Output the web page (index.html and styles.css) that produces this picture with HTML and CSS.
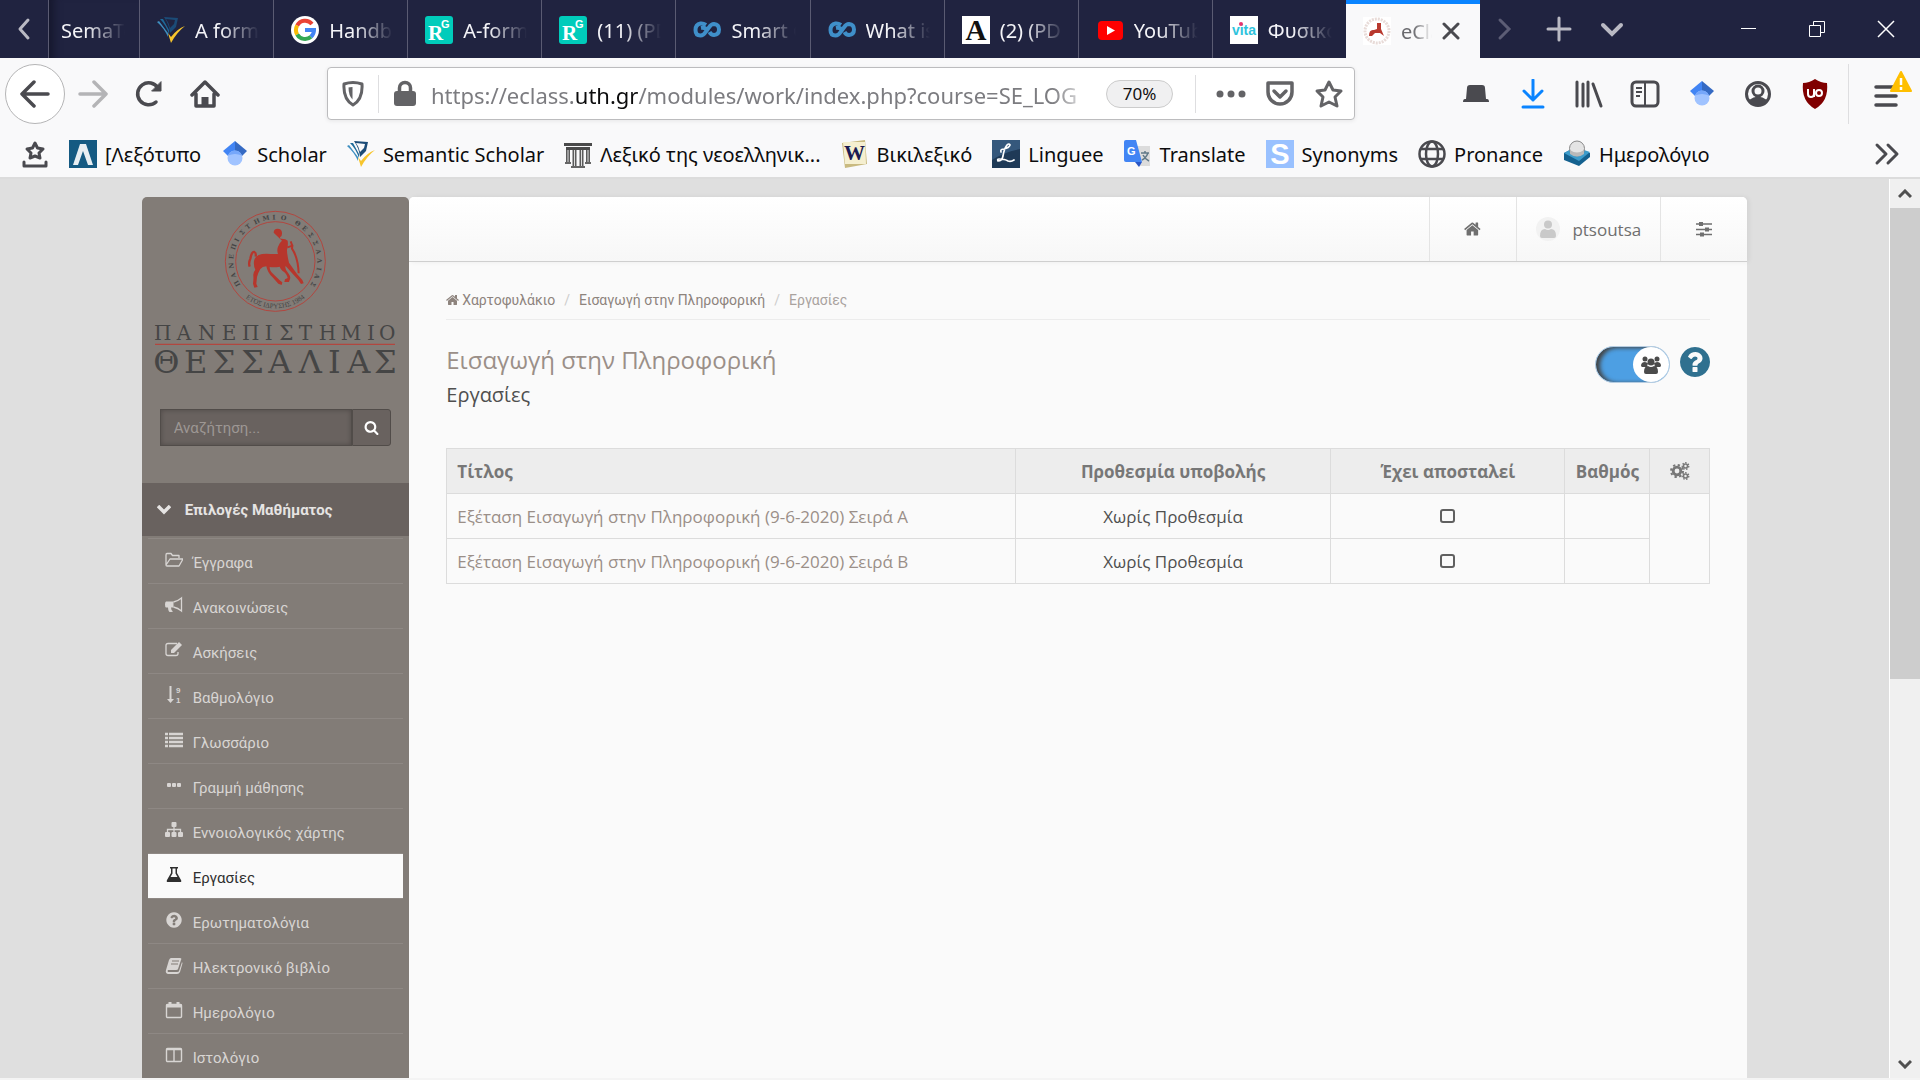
FILE: index.html
```html
<!DOCTYPE html>
<html lang="el">
<head>
<meta charset="utf-8">
<title>eClass - Εργασίες</title>
<link rel="stylesheet" href="styles.css">
</head>
<body>
<svg class="defs" aria-hidden="true">
  <symbol id="semantic" viewBox="0 0 28 28">
    <path d="M0 6l2-1 9 12v4Q7 12 0 6z" fill="#3f8fc0"/><path d="M3 3l3 0 6 11v4Q9 9 3 3z" fill="#1d6a99"/>
    <path d="M7 1l14 1-2 9-6 6Q12 8 7 1zM9 3q3 4 4 9l4-4 1-4z" fill="#1b4b77" fill-rule="evenodd"/>
    <path d="M11 17l3 4Q20 13 28 10 20 16 14 27z" fill="#f7c52d"/>
  </symbol>
  <symbol id="rgate" viewBox="0 0 28 28">
    <rect width="28" height="28" rx="3" fill="#00ccbb"/>
    <text x="3" y="24" font-family="Liberation Serif, serif" font-size="21" font-weight="bold" fill="#fff">R</text>
    <text x="16" y="12" font-family="Liberation Sans, sans-serif" font-size="11" font-weight="bold" fill="#fff">G</text>
  </symbol>
  <symbol id="loop" viewBox="0 0 28 28">
    <path d="M13 9Q10 7 7.500 7.500 2.500 8.500 2.500 14t5 5.500q3 0 5.500-4l3-4q2-3.500 5-3.500 5 .5 5 5.500T21 19q-3 0-4.500-3M8 12q5-1 6 3" fill="none" stroke="#3f8fc9" stroke-width="4"/>
  </symbol>
  <symbol id="scholar" viewBox="0 0 28 28">
    <path d="M14 1L2 11l5 5h7z" fill="#4285f4"/><path d="M14 1l12 10-5 5h-7z" fill="#356ac3"/>
    <circle cx="14" cy="18" r="7.500" fill="#a0c3ff"/><path d="M7 15.500a7.500 7.500 0 0 1 14 0q-7-3-14 0z" fill="#76a7fa"/>
  </symbol>
  <symbol id="home" viewBox="0 0 1792 1792">
    <path fill="currentColor" d="M1408 992v480q0 26-19 45t-45 19h-384v-384h-256v384h-384q-26 0-45-19t-19-45v-480q0-1 .5-3t.5-3l575-474 575 474q1 2 1 6zm223-69l-62 74q-8 9-21 11h-3q-13 0-21-7l-692-577-692 577q-12 8-24 7-13-2-21-11l-62-74q-8-10-7-23.500t11-21.500l719-599q32-26 76-26t76 26l244 204v-195q0-14 9-23t23-9h192q14 0 23 9t9 23v408l219 182q10 8 11 21.500t-7 23.500z"/>
  </symbol>
  <symbol id="question" viewBox="0 0 1792 1792">
    <path fill="currentColor" d="M1024 1376v-192q0-14-9-23t-23-9h-192q-14 0-23 9t-9 23v192q0 14 9 23t23 9h192q14 0 23-9t9-23zm256-672q0-88-55.500-163t-138.500-116-170-41q-243 0-371 213-15 24 8 42l132 100q7 6 19 6 16 0 25-12 53-68 86-92 34-24 86-24 48 0 85.500 26t37.500 59q0 38-20 61t-68 45q-63 28-115.500 86.500t-52.500 125.500v36q0 14 9 23t23 9h192q14 0 23-9t9-23q0-19 21.500-49.500t54.500-49.500q32-18 49-28.500t46-35 44.500-48 28-60.500 12.500-81zm384 192q0 209-103 385.500t-279.500 279.500-385.500 103-385.500-103-279.500-279.500-103-385.500 103-385.500 279.500-279.500 385.500-103 385.500 103 279.500 279.500 103 385.500z"/>
  </symbol>
</svg>

<header class="browser">
  <div class="tabbar">
    <button class="tab-scroll" aria-label="Scroll tabs left"><svg width="16" height="26" viewBox="0 0 16 26" fill="none" stroke="#b9b9c3" stroke-width="3" stroke-linecap="round" stroke-linejoin="round"><path d="M12 4L4 13l8 9"/></svg></button>
    <nav class="tabs">
      <a href="#" class="tab cut"><span>SemaTo</span></a>
      <a href="#" class="tab"><svg><use href="#semantic"/></svg><span>A form</span></a>
      <a href="#" class="tab"><svg viewBox="0 0 28 28"><circle cx="14" cy="14" r="14" fill="#fff"/><g fill="none" stroke-width="4"><path d="M21 8A9 9 0 0 0 6.200 9.500" stroke="#ea4335"/><path d="M6.200 9.500a9 9 0 0 0 0 9" stroke="#fbbc05"/><path d="M6.200 18.500A9 9 0 0 0 20 20.700" stroke="#34a853"/><path d="M14 14h9q0 4-3 6.700" stroke="#4285f4"/></g></svg><span>Handb</span></a>
      <a href="#" class="tab"><svg><use href="#rgate"/></svg><span>A-form</span></a>
      <a href="#" class="tab"><svg><use href="#rgate"/></svg><span>(11) (PD</span></a>
      <a href="#" class="tab"><svg><use href="#loop"/></svg><span>Smart C</span></a>
      <a href="#" class="tab"><svg><use href="#loop"/></svg><span>What is</span></a>
      <a href="#" class="tab"><svg viewBox="0 0 28 28"><path fill="#fff" d="M0 0h28v28H0z"/><text x="14" y="24" text-anchor="middle" font-family="Liberation Serif, serif" font-weight="bold" font-size="29" fill="#111">A</text></svg><span>(2) (PD</span></a>
      <a href="#" class="tab"><svg viewBox="0 0 28 28"><rect x="2" y="5" width="25" height="19" rx="4" fill="#f00"/><path d="M11 10l8 4.500-8 4.500z" fill="#fff"/></svg><span>YouTub</span></a>
      <a href="#" class="tab"><svg viewBox="0 0 28 28"><path fill="#fff" d="M0 0h28v28H0z"/><text x="14" y="19" text-anchor="middle" font-family="Liberation Sans, sans-serif" font-weight="bold" font-size="14" fill="#2fc3dd">vita</text><circle cx="11" cy="8" r="2" fill="#e8336d"/></svg><span>Φυσικο</span></a>
      <a href="#" class="tab active"><svg viewBox="0 0 28 28"><path fill="#fff" d="M0 0h28v28H0z"/><circle cx="14" cy="14" r="12" fill="none" stroke="#e8dbd8" stroke-width="3" stroke-dasharray="2 1"/><path d="M6 19q0-7 5-6l3-1 0-6 4 0v6l3 7-4-3-5 0-3 3z" fill="#b8382e"/></svg><span>eClass</span><svg class="close" viewBox="0 0 18 18" stroke="#4a4a4f" stroke-width="3" stroke-linecap="round"><path d="M2 2l14 14M16 2L2 16"/></svg></a>
    </nav>
    <div class="tab-tools">
      <button aria-label="Scroll tabs right"><svg width="26" height="26" viewBox="0 0 26 26" fill="none" stroke="#5c5d75" stroke-width="3" stroke-linecap="round"><path d="M8 4l9 9-9 9"/></svg></button>
      <button aria-label="New tab"><svg width="26" height="26" viewBox="0 0 26 26" stroke="#b9b9c3" stroke-width="3" stroke-linecap="round"><path d="M13 2v22M2 13h22"/></svg></button>
      <button aria-label="All tabs"><svg width="26" height="26" viewBox="0 0 26 26" fill="none" stroke="#b9b9c3" stroke-width="4" stroke-linecap="round"><path d="M4 9l9 9 9-9"/></svg></button>
    </div>
    <div class="window-tools">
      <button aria-label="Minimize"><svg width="18" height="18" viewBox="0 0 18 18" stroke="#fff"><path d="M2 8.500h15"/></svg></button>
      <button aria-label="Restore"><svg width="18" height="18" viewBox="0 0 18 18" fill="none" stroke="#fff"><path d="M1.500 5.500h11v11h-11zM5.500 5v-3.500h11v11H13"/></svg></button>
      <button aria-label="Close window"><svg width="18" height="18" viewBox="0 0 18 18" stroke="#fff" stroke-width="1.500"><path d="M1 1l16 16M17 1L1 17"/></svg></button>
    </div>
  </div>

  <div class="toolbar">
    <div class="nav-buttons">
      <button class="back" aria-label="Back"><svg width="30" height="30" viewBox="0 0 30 30" fill="none" stroke="#4a4a4f" stroke-width="3.500" stroke-linecap="round" stroke-linejoin="round"><path d="M28 15H2M14 3L2 15l12 12"/></svg></button>
      <button aria-label="Forward" disabled><svg width="30" height="30" viewBox="0 0 30 30" fill="none" stroke="#b4b4b6" stroke-width="3.500" stroke-linecap="round" stroke-linejoin="round"><path d="M2 15h26M16 3l12 12-12 12"/></svg></button>
      <button aria-label="Reload"><svg width="30" height="30" viewBox="0 0 30 30" fill="none" stroke="#4a4a4f" stroke-width="3.500" stroke-linecap="round"><path d="M22 23A11 11 0 1 1 24 9"/><path d="M18 12h9V3z" fill="#4a4a4f" stroke-width="1"/></svg></button>
      <button aria-label="Home"><svg width="30" height="30" viewBox="0 0 30 30" fill="none" stroke="#4a4a4f" stroke-width="3.500" stroke-linecap="round" stroke-linejoin="round"><path d="M2 16L15 3l13 13M6 15v12h18V15"/><path d="M15 27v-9" stroke-width="7" stroke-linecap="butt"/></svg></button>
    </div>
    <div class="urlbar">
      <svg class="shield" width="24" height="28" viewBox="0 0 24 28"><path d="M3 4q9-3 18 0 1 15-9 21Q2 19 3 4z" fill="none" stroke="#636366" stroke-width="3" stroke-linejoin="round"/><path d="M11.500 7q-3 0-4 .5 0 8 4 12z" fill="#636366"/></svg>
      <svg class="lock" width="24" height="28" viewBox="0 0 24 28"><rect x="1" y="11" width="22" height="15" rx="3" fill="#636366"/><path d="M6.500 12V8a5.500 5.500 0 0 1 11 0v4" fill="none" stroke="#636366" stroke-width="3.500"/></svg>
      <div class="address">https://eclass.<b>uth.gr</b>/modules/work/index.php?course=SE_LOG</div>
      <button class="zoom-level">70%</button>
      <div class="url-actions">
        <svg width="30" height="30" viewBox="0 0 30 30" fill="#636366"><circle cx="4" cy="15" r="3.500"/><circle cx="15" cy="15" r="3.500"/><circle cx="26" cy="15" r="3.500"/></svg>
        <svg width="30" height="30" viewBox="0 0 30 30" fill="none" stroke="#636366" stroke-width="3.500" stroke-linecap="round" stroke-linejoin="round"><path d="M3 4h24v9a12 12 0 0 1-24 0z"/><path d="M9 12l6 6 6-6"/></svg>
        <svg width="30" height="30" viewBox="0 0 30 30" fill="none" stroke="#636366" stroke-width="3" stroke-linejoin="round"><path d="M15 3l4 8 8 1-6 6 2 9-8-4-8 4 2-9-6-6 8-1z"/></svg>
      </div>
    </div>
    <div class="extensions">
      <button aria-label="Hat"><svg width="30" height="30" viewBox="0 0 30 30" fill="#4a4a4f"><path d="M5 20L6 9q0-3 3-3h12q3 0 3 3l1 11h1q2 0 2 3H2q0-3 2-3z"/></svg></button>
      <button aria-label="Downloads"><svg width="30" height="30" viewBox="0 0 30 30" fill="none" stroke="#0a84ff" stroke-width="3" stroke-linecap="round" stroke-linejoin="round"><path d="M15 1v20M6 12l9 9 9-9M5 28h20"/></svg></button>
      <button aria-label="Library"><svg width="30" height="30" viewBox="0 0 30 30" fill="none" stroke="#4a4a4f" stroke-width="3" stroke-linecap="round"><path d="M3 3v24M9 5v22M14 3v24M19 5l8 22"/></svg></button>
      <button aria-label="Sidebars"><svg width="30" height="30" viewBox="0 0 30 30" fill="none" stroke="#4a4a4f" stroke-width="3"><rect x="2" y="3" width="26" height="24" rx="4"/><path d="M15 3v24M6 9h6M6 13h6M6 17h4" stroke-width="2"/></svg></button>
      <button aria-label="Scholar"><svg width="28" height="28"><use href="#scholar"/></svg></button>
      <button aria-label="Account"><svg width="30" height="30" viewBox="0 0 30 30"><circle cx="15" cy="15" r="11.500" fill="none" stroke="#4a4a4f" stroke-width="3"/><circle cx="15" cy="12" r="5" fill="none" stroke="#4a4a4f" stroke-width="3"/><path d="M6 21q9-7 18 0-9 10-18 0z" fill="#4a4a4f"/></svg></button>
      <button aria-label="uBlock Origin"><svg width="30" height="30" viewBox="0 0 30 30"><path d="M15 0q6 4 12 4 2 18-12 26Q1 22 3 4q6 0 12-4z" fill="#800000"/><path d="M8 10v5q0 3 3 3t3-3v-5M14 10v8" fill="none" stroke="#fff" stroke-width="2"/><circle cx="19" cy="14" r="3" fill="none" stroke="#fff" stroke-width="2"/></svg></button>
    </div>
    <button class="menu" aria-label="Menu"><svg width="42" height="42" viewBox="0 0 42 42"><path d="M6 17h18M6 26h20M6 35h20" stroke="#4a4a4f" stroke-width="3.500" stroke-linecap="round"/><path d="M31 2l10 19H21z" fill="#ffbf00" stroke="#ffbf00" stroke-width="2" stroke-linejoin="round"/><path d="M31 8v7M31 17v3" stroke="#fff" stroke-width="2.500"/></svg></button>
  </div>

  <nav class="bookmarks">
    <a href="#" aria-label="Bookmarks"><svg viewBox="0 0 28 28" fill="none" stroke="#4a4a4f" stroke-width="3" stroke-linecap="round" stroke-linejoin="round"><path d="M14 3l2.500 5 5.500 1-4 4 1 5-5-2-5 2 1-5-4-4 5.500-1zM3 22v4h22v-4"/></svg></a>
    <a href="#"><svg viewBox="0 0 28 28"><path d="M0 0h28v28H0z" fill="#155a82"/><path d="M4 25L11 4h6l7 21h-5L14 11 9 25z" fill="#e8eef2"/></svg>[Λεξότυπο</a>
    <a href="#"><svg><use href="#scholar"/></svg>Scholar</a>
    <a href="#"><svg><use href="#semantic"/></svg>Semantic Scholar</a>
    <a href="#"><svg viewBox="0 0 28 28"><path d="M0 3h28v3H0zM2 7h24v3H2z" fill="#4a4a4a"/><path d="M4 10v13M10.500 10v16M17.500 10v16M24 10v13" stroke="#5b5b5b" stroke-width="4"/><path d="M4 10v12M10.500 10v16M17.500 10v16M24 10v12" stroke="#ddd"/><path d="M1 23h6M7 27h14M21 23h6" stroke="#666" stroke-width="2"/></svg>Λεξικό της νεοελληνικ...</a>
    <a href="#"><svg viewBox="0 0 28 28"><path d="M1 3L24 0l2 24-22 4z" fill="#c9ba80"/><path d="M2 2h22l1 22H4z" fill="#f5efd0"/><text x="13.500" y="20" text-anchor="middle" font-family="Liberation Serif, serif" font-size="21" font-weight="bold" fill="#1b1b52">W</text></svg>Βικιλεξικό</a>
    <a href="#"><svg viewBox="0 0 28 28"><path d="M0 0h28v28H0z" fill="#1f3a57"/><path d="M0 0h28v9Q12 12 0 20z" fill="#35587c"/><path d="M9 12q-1-3 3-3 5-1 6-4-1-2-3 0-3 4-4 11-1 5-5 5-1-2 1-2 6 0 9 2 3 1 6-1" fill="none" stroke="#fff" stroke-width="1.700" stroke-linecap="round"/></svg>Linguee</a>
    <a href="#"><svg viewBox="0 0 28 28"><path d="M12 6h14v20H16z" fill="#dcdcdc"/><path d="M2 0h10l6 22H2q-2 0-2-2V2q0-2 2-2z" fill="#4285f4"/><path d="M11 22h7l-3 5z" fill="#2a56c6"/><text x="3" y="15" font-family="Liberation Sans, sans-serif" font-size="11" font-weight="bold" fill="#fff">G</text><path d="M17 13h8M21 11v2M24 13q-2 5-6 7M19 15q2 4 6 6" stroke="#607988" stroke-width="1.500" fill="none"/></svg>Translate</a>
    <a href="#"><svg viewBox="0 0 28 28"><path d="M0 0h28v28H0z" fill="#99c1ff"/><text x="14" y="24" text-anchor="middle" font-family="Liberation Sans, sans-serif" font-size="29" font-weight="bold" fill="#fff">S</text></svg>Synonyms</a>
    <a href="#"><svg viewBox="0 0 28 28" fill="none" stroke="#4a4a4f" stroke-width="2.500"><circle cx="14" cy="14" r="12.500"/><ellipse cx="14" cy="14" rx="6" ry="12.500"/><path d="M3 9h22M3 19h22"/></svg>Pronance</a>
    <a href="#"><svg viewBox="0 0 28 28"><path d="M1 13l12-6 14 6v4L16 26 1 20z" fill="#14618f"/><path d="M1 13l11-6 15 5-11 9z" fill="#3d9ccb"/><circle cx="14" cy="8.500" r="7.500" fill="#e4e4e4" stroke="#888"/><path d="M7 10q7 5 14 0v4q-7 5-14 0z" fill="#b9b9b9"/></svg>Ημερολόγιο</a>
    <button class="overflow" aria-label="More bookmarks"><svg width="26" height="24" viewBox="0 0 26 24" fill="none" stroke="#4a4a4f" stroke-width="3" stroke-linecap="round" stroke-linejoin="round"><path d="M3 3l9 9-9 9M14 3l9 9-9 9"/></svg></button>
  </nav>
</header>

<div class="viewport">
  <div class="page">
    <div class="layout">
      <aside class="sidebar">
        <a href="#" class="logo" aria-label="Πανεπιστήμιο Θεσσαλίας">
          <svg width="242" height="164" viewBox="78 90 726 492">
            <g fill="none" stroke="#b2463f" stroke-width="3"><circle cx="442" cy="244" r="150"/><circle cx="442" cy="244" r="119"/></g>
            <path id="arc-top" fill="none" d="M337.500 314.500A126 126 0 1 1 546.500 314.500"/>
            <path id="arc-low" fill="none" d="M308 290A142 142 0 0 0 576 290"/>
            <g fill="#454545" font-family="DejaVu Serif, serif" font-weight="bold">
              <text font-size="19" x="0 27 54 81 108 134 158 182 209 235 264 288 311 331 357 383 409 435 461 488 506 532"><textPath href="#arc-top">ΠΑΝΕΠΙΣΤΗΜΙΟ ΘΕΣΣΑΛΙΑΣ</textPath></text>
              <text font-size="21" font-weight="normal" font-family="Liberation Serif, serif" text-anchor="middle"><textPath href="#arc-low" startOffset="50%">ΕΤΟΣ ΙΔΡΥΣΗΣ 1984</textPath></text>
            </g>
            <path fill="#b7362c" d="M437 158q0-12 12-12t13 12-6 14l1 4q16-1 22 6 2 14-2 28 0 14 6 38l24 34 16 18 4 10-8 2-8-12-22-24-16-18q-4 8 8 22 6 8 6 14l-4 12h-14l2-8 8-4q-2-14-16-22-6-6-8-12-14 3-30 1 0 12 10 20l20 20 8 6-2 8-10-4-18-20q-14-12-18-32-12 0-18 8-6 10-10 24l-2 20 4 10-10 2-4-12q2-12 1-24-1-10 6-18-6-12-4-26 2-12 14-18 12-5 36-3h22q-4-12 0-22 4-12 12-18z"/>
            <path d="M365 260q-4-12 2-24 4-22 12-20 6 2 4 14" fill="none" stroke="#b7362c" stroke-width="7"/>
            <path d="M488 184q6 12 4 22 18 26 20 74M478 202l18-6" fill="none" stroke="#b7362c" stroke-width="6"/>
            <g fill="#454545" font-family="DejaVu Serif, serif">
              <text font-size="60" y="479" x="78 146 210 281 342 410 454 512 572 638 717 753">ΠΑΝΕΠΙΣΤΗΜΙΟ</text>
              <text font-size="96" y="578" x="76 168 254 340 421 512 600 658 738">ΘΕΣΣΑΛΙΑΣ</text>
            </g>
            <path d="M81 493h720" stroke="#b2463f" stroke-width="4"/>
          </svg>
        </a>
        <form class="search">
          <input type="text" placeholder="Αναζήτηση..." aria-label="Αναζήτηση">
          <button type="button" aria-label="Αναζήτηση"><svg width="15" height="15" viewBox="0 0 1792 1792"><path fill="#fff" d="M1216 832q0-185-131.500-316.500t-316.500-131.500-316.500 131.500-131.500 316.500 131.500 316.500 316.500 131.500 316.500-131.500 131.500-316.500zm512 832q0 52-38 90t-90 38q-54 0-90-38l-343-342q-179 124-399 124-143 0-273.500-55.500t-225-150-150-225-55.500-273.500 55.500-273.500 150-225 225-150 273.500-55.500 273.500 55.500 225 150 150 225 55.500 273.500q0 220-124 399l343 343q37 37 37 90z"/></svg></button>
        </form>
        <button class="section"><svg width="14" height="10" viewBox="0 0 14 10" fill="none" stroke="#e6e4e3" stroke-width="3.500"><path d="M1 1l6 6 6-6"/></svg>Επιλογές Μαθήματος</button>
        <ul class="course-menu">
          <li><a href="#"><svg viewBox="0 0 18 18" fill="none" stroke="currentColor" stroke-width="1.300" stroke-linejoin="round"><path d="M14 7V4.500H7.500L6 2.500H2Q1 2.500 1 4v10q0 1 1 1h12l4-7H5l-4 6"/></svg>Έγγραφα</a></li>
          <li><a href="#"><svg viewBox="0 0 18 18" fill="currentColor"><path d="M1 5.500h7.500v6H6q0 3 2 4-3 1-4 0-1-2-1-4H1Q0 11 0 8.500t1-3z"/><path d="M8.500 6Q13 5 16.500 2v13Q13 12 8.500 11" fill="none" stroke="currentColor" stroke-width="1.300"/></svg>Ανακοινώσεις</a></li>
          <li><a href="#"><svg viewBox="0 0 18 18" fill="none" stroke="currentColor" stroke-width="1.300"><path d="M12 2.500H3q-2 0-2 2v8q0 2 2 2h8q2 0 2-2V11"/><path d="M6 12V9l8-8 3 3-8 8z" fill="currentColor" stroke="none"/></svg>Ασκήσεις</a></li>
          <li><a href="#"><svg viewBox="0 0 18 18" fill="currentColor"><path d="M4.500 0h2v13H9l-3.500 4L2 13h2.500z"/><text x="11" y="7" font-size="8" font-weight="bold" font-family="Liberation Sans, sans-serif">9</text><text x="11" y="17" font-size="8" font-weight="bold" font-family="Liberation Sans, sans-serif">1</text></svg>Βαθμολόγιο</a></li>
          <li><a href="#"><svg viewBox="0 0 18 18" fill="none" stroke="currentColor" stroke-width="2.500"><path d="M0 3h3M4 3h14M0 7h3M4 7h14M0 11h3M4 11h14M0 15h3M4 15h14"/></svg>Γλωσσάριο</a></li>
          <li><a href="#"><svg viewBox="0 0 18 18" fill="currentColor"><rect x="2" y="7" width="4" height="4" rx="1"/><rect x="7" y="7" width="4" height="4" rx="1"/><rect x="12" y="7" width="4" height="4" rx="1"/></svg>Γραμμή μάθησης</a></li>
          <li><a href="#"><svg viewBox="0 0 18 18" fill="currentColor"><rect x="6.500" y="1" width="5" height="5" rx="1"/><rect y="11" width="5" height="5" rx="1"/><rect x="6.500" y="11" width="5" height="5" rx="1"/><rect x="13" y="11" width="5" height="5" rx="1"/><path d="M9 5v7M2.500 12V8.500h13V12" fill="none" stroke="currentColor" stroke-width="1.300"/></svg>Εννοιολογικός χάρτης</a></li>
          <li class="current"><a href="#"><svg viewBox="0 0 18 18" fill="currentColor"><path d="M5 1h8v1.500h-1V7l4 7q1 2-1 2H3q-2 0-1-2l4-7V2.500H5zM7.500 2.500V7.500L5.500 11h7l-2-3.500v-5z" fill-rule="evenodd"/></svg>Εργασίες</a></li>
          <li><a href="#"><svg><use href="#question"/></svg>Ερωτηματολόγια</a></li>
          <li><a href="#"><svg viewBox="0 0 18 18" fill="currentColor"><path d="M6 2h9q2 0 1 2l-3 9q0 1-2 1H3q-1 1 0 2h9q2 0 2-1l3-9q1 1 0 3l-2 7q-1 2-3 2H3q-3-1-2-4L4 4q1-2 2-2z"/><path d="M7 5h7M6 8h7" stroke="#827c77" stroke-width="1.200"/></svg>Ηλεκτρονικό βιβλίο</a></li>
          <li><a href="#"><svg viewBox="0 0 18 18" fill="none" stroke="currentColor" stroke-width="1.400"><rect x="1.500" y="3.500" width="15" height="13" rx="1"/><path d="M1 5h16M5 1v4M9 3v2M13 1v4" stroke-width="3"/></svg>Ημερολόγιο</a></li>
          <li><a href="#"><svg viewBox="0 0 18 18" fill="none" stroke="currentColor" stroke-width="1.400"><rect x="1.500" y="2.500" width="15" height="13" rx="1"/><path d="M1 3.500h16M9 3v12"/></svg>Ιστολόγιο</a></li>
        </ul>
      </aside>

      <main class="content">
        <div class="topbar">
          <a href="#" aria-label="Αρχική"><svg width="18" height="18"><use href="#home"/></svg></a>
          <a href="#" class="user"><svg width="24" height="24" viewBox="0 0 24 24"><circle cx="12" cy="12" r="12" fill="#f2f2f2"/><circle cx="12" cy="7.500" r="4" fill="#c9c9c9"/><path d="M4 19q0-7 5-7 3 2 6 0 5 0 5 7 0 2-2 2H6q-2 0-2-2z" fill="#c9c9c9"/></svg>ptsoutsa</a>
          <a href="#" aria-label="Επιλογές"><svg width="16" height="16" viewBox="0 0 16 16" stroke="currentColor"><path d="M0 3h16M0 8.500h16M0 13.500h16" stroke-width="1.300"/><path d="M5 1v4M11 6.500v4M6 11.500v4" stroke-width="4"/></svg></a>
        </div>
        <div class="body">
          <nav class="breadcrumb">
            <a href="#"><svg width="14" height="14"><use href="#home"/></svg> Χαρτοφυλάκιο</a><i>/</i><a href="#">Εισαγωγή στην Πληροφορική</a><i>/</i><span>Εργασίες</span>
          </nav>
          <div class="heading">
            <div>
              <h1><a href="#">Εισαγωγή στην Πληροφορική</a></h1>
              <h2>Εργασίες</h2>
            </div>
            <div class="heading-tools">
              <label class="switch">
                <input type="checkbox" checked aria-label="Προβολή εκπαιδευόμενου">
                <span class="knob"><svg width="20" height="20" viewBox="0 0 20 20" fill="#4b4b4b"><circle cx="4" cy="4" r="2.500"/><circle cx="16" cy="4" r="2.500"/><path d="M0 11q0-4 4-4l3 1-1 4H1zM20 11q0-4-4-4l-3 1 1 4h5z"/><circle cx="10" cy="7" r="3.500"/><path d="M3 17q0-6 4-6 3 2 6 0 4 0 4 6 0 2-2 2H5q-2 0-2-2z"/></svg></span>
              </label>
              <a href="#" class="help" aria-label="Βοήθεια"><svg width="30" height="30" viewBox="128 128 1536 1536"><use href="#question" width="1792" height="1792"/></svg></a>
            </div>
          </div>
          <table>
            <colgroup><col class="c-title"><col class="c-due"><col><col class="c-grade"><col class="c-tools"></colgroup>
            <thead><tr><th>Τίτλος</th><th>Προθεσμία υποβολής</th><th>Έχει αποσταλεί</th><th>Βαθμός</th>
              <th><svg width="20" height="18" viewBox="0 0 20 18" fill="none" stroke="currentColor"><circle cx="7" cy="9" r="3.800" stroke-width="2.800"/><circle cx="7" cy="9" r="6" stroke-width="2" stroke-dasharray="2.300 2.412"/><circle cx="15.500" cy="4" r="2" stroke-width="1.500"/><circle cx="15.500" cy="4" r="3.300" stroke-width="1.300" stroke-dasharray="1.500 1.455"/><circle cx="15.500" cy="14" r="2" stroke-width="1.500"/><circle cx="15.500" cy="14" r="3.300" stroke-width="1.300" stroke-dasharray="1.500 1.455"/></svg></th></tr></thead>
            <tbody>
              <tr><td><a href="#">Εξέταση Εισαγωγή στην Πληροφορική (9-6-2020) Σειρά Α</a></td><td>Χωρίς Προθεσμία</td><td><input type="checkbox" aria-label="Έχει αποσταλεί: Σειρά Α"></td><td></td><td rowspan="2"></td></tr>
              <tr><td><a href="#">Εξέταση Εισαγωγή στην Πληροφορική (9-6-2020) Σειρά Β</a></td><td>Χωρίς Προθεσμία</td><td><input type="checkbox" aria-label="Έχει αποσταλεί: Σειρά Β"></td><td></td></tr>
            </tbody>
          </table>
        </div>
      </main>
    </div>
  </div>
  <div class="scrollbar">
    <button aria-label="Scroll up"><svg width="14" height="10" viewBox="0 0 14 10" fill="none" stroke="#505050" stroke-width="3"><path d="M1 8l6-6 6 6"/></svg></button>
    <div class="track"><div class="thumb"></div></div>
    <button aria-label="Scroll down"><svg width="14" height="10" viewBox="0 0 14 10" fill="none" stroke="#505050" stroke-width="3"><path d="M1 2l6 6 6-6"/></svg></button>
  </div>
</div>
</body>
</html>
```
FILE: styles.css
```css
* { box-sizing: border-box; }
body { margin: 0; height: 100vh; display: flex; flex-direction: column; overflow: hidden; background: #f4f4f4; font-family: "Open Sans", "Noto Sans", sans-serif; color: #4f4f4f; }
a { color: inherit; text-decoration: none; }
button { border: 0; padding: 0; background: none; color: inherit; font: inherit; display: flex; align-items: center; justify-content: center; }
svg { display: block; flex: none; }
.defs { display: none; }

/* Browser chrome */
.browser { flex: none; background: #f9f9fa; border-bottom: 2px solid #dcdcdc; font-family: "Noto Sans", sans-serif; }
.tabbar { display: flex; height: 58px; background: #202340; color: #f4f4f8; }
.tab-scroll { width: 48px; }
.tabs { flex: 1; display: grid; grid-template-columns: 91fr repeat(10, 134fr); min-width: 0; }
.tab { min-width: 0; display: flex; align-items: center; gap: 10px; padding: 2px 14px 0 17px; border-left: 1px solid #5a5b72; font-size: 20px; }
.tab.cut { padding-left: 12px; box-shadow: inset 12px 0 10px -8px #14162b; }
.tab svg { width: 28px; height: 28px; }
.tab span { flex: 1; min-width: 0; overflow: hidden; white-space: nowrap; mask-image: linear-gradient(to right, #000 40%, transparent); }
.tab.active { background: #f9f9fa; color: #4a4a4f; border-left: 0; border-top: 4px solid #0a84ff; padding-top: 0; }
.tab.active span { color: #6a6a6e; }
.tab svg.close { width: 18px; height: 18px; margin-right: 6px; }
.tab-tools { width: 165px; display: flex; justify-content: space-between; padding: 0 20px 0 12px; }
.window-tools { width: 275px; display: flex; justify-content: flex-end; }
.window-tools button { width: 69px; }

.toolbar { display: flex; align-items: center; height: 71px; }
.nav-buttons { display: flex; align-items: center; width: 327px; padding-left: 5px; }
.nav-buttons button { width: 56px; height: 60px; }
.nav-buttons .back { width: 60px; border: 1px solid #b5b5b6; border-radius: 50%; background: #fff; }
.urlbar { flex: 1; display: flex; align-items: center; height: 53px; background: #fff; border: 1px solid #bcbcbe; border-radius: 4px; box-shadow: 0 1px 4px rgba(0, 0, 0, .08); }
.shield { margin: 0 13px; }
.lock { border-left: 1px solid #dedee0; width: 53px; height: 38px; padding: 5px 12px; }
.address { flex: 1; min-width: 0; overflow: hidden; white-space: nowrap; padding-top: 2px; font-size: 22px; color: #7c7c80; mask-image: linear-gradient(to right, #000 94%, transparent); }
.address b { font-weight: 400; color: #0c0c0d; }
.zoom-level { width: 67px; height: 28px; margin-left: 14px; border: 1px solid #ccc; border-radius: 14px; background: #f0f0f1; color: #111; font-size: 17px; }
.url-actions { display: flex; align-items: center; gap: 19px; height: 38px; margin-left: 22px; padding: 0 10px 0 20px; border-left: 1px solid #dedee0; }
.extensions { display: flex; width: 493px; padding: 0 5px 0 93px; }
.extensions button { flex: 1; }
.menu { width: 72px; height: 60px; padding: 6px 0 0 12px; border-left: 1px solid #dedee0; align-items: flex-start; }

.bookmarks { display: flex; align-items: center; gap: 20px; height: 48px; padding: 2px 20px 0 21px; color: #0c0c0d; font-size: 20px; }
.bookmarks a { display: flex; align-items: center; gap: 8px; white-space: nowrap; }
.bookmarks a svg { width: 28px; height: 28px; }
.overflow { margin-left: auto; }

/* Page frame */
.viewport { flex: 1; display: flex; min-height: 0; margin-bottom: 2px; }
.page { flex: 1; background: #dfdfdf; overflow: hidden; padding-top: 18px; }
.layout { display: flex; width: 85%; min-height: 100%; margin: 0 auto; }
.scrollbar { width: 31px; display: flex; flex-direction: column; background: #f0f0f0; border-left: 1px solid #fff; }
.scrollbar button { height: 29px; }
.track { flex: 1; }
.thumb { height: 56%; background: #cdcdcd; }

/* Sidebar */
.sidebar { flex: 0 0 16.667%; min-width: 0; background: #827c77; border-radius: 5px 5px 0 0; font-family: Roboto, sans-serif; color: #d8d5d3; }
.logo { display: flex; justify-content: center; padding-top: 13px; }
.search { display: flex; height: 37px; margin: 35px 18px 37px; }
.search input { flex: 1; width: 0; min-width: 0; padding: 0 13px; border: 1px solid #514c49; border-radius: 0; background: #69625f; box-shadow: inset 0 0 5px rgba(0, 0, 0, .25); font: 15px Roboto, sans-serif; color: #ddd; }
.search input::placeholder { color: #9d9794; }
.search button { width: 39px; border: 1px solid #514c49; border-radius: 0 3px 3px 0; background: #69625f; }
.section { width: 100%; height: 53px; padding-left: 15px; gap: 14px; justify-content: flex-start; background: #69625f; color: #e6e4e3; font-size: 15px; font-weight: 700; }
.course-menu { list-style: none; margin: 2px 6px 0; padding: 0; border-top: 1px solid #8e8884; }
.course-menu li { height: 45px; border-bottom: 1px solid #8e8884; }
.course-menu a { display: flex; align-items: center; gap: 10px; height: 100%; padding: 4px 17px 0; font-size: 15px; white-space: nowrap; }
.course-menu svg { width: 18px; height: 18px; margin-bottom: 6px; }
.course-menu .current { background: #fafafa; color: #2f2f2f; }

/* Main column */
.content { flex: 1; min-width: 0; background: #fafafa; border-radius: 5px 5px 0 0; }
.topbar { display: flex; justify-content: flex-end; height: 65px; border-bottom: 1px solid #cfcfcf; border-radius: 5px 5px 0 0; background: linear-gradient(#fff, #f7f7f7); box-shadow: 2px 0 5px rgba(0, 0, 0, .06); }
.topbar a { width: 87px; display: flex; align-items: center; justify-content: center; border-left: 1px solid #e4e4e4; color: #6f6f6f; }
.topbar .user { width: 144px; gap: 12px; font-size: 17px; }
.body { padding: 24px 37px; }
.breadcrumb { display: flex; align-items: center; height: 34px; padding-bottom: 6px; border-bottom: 1px solid #ececec; color: #8d837d; font-family: Roboto, sans-serif; font-size: 14px; }
.breadcrumb a { display: flex; align-items: center; gap: 2px; }
.breadcrumb i { margin: 0 9px; font-style: normal; color: #ccc; }
.breadcrumb span { color: #a9a29e; }
.heading { display: flex; justify-content: space-between; height: 128px; padding-top: 24px; }
h1, h2 { margin: 0; font-weight: 400; }
h1 { font-size: 24px; line-height: 32px; color: #9a8f88; }
h2 { font-size: 20px; line-height: 38px; }
.heading-tools { display: flex; gap: 10px; align-items: flex-start; }
.switch { display: flex; width: 75px; height: 37px; margin-top: 2px; border: 1px solid #b6cce0; border-radius: 19px; background: #4d9fe3; box-shadow: inset 4px 1px 4px #444; justify-content: flex-end; }
.switch input { appearance: none; width: 0; height: 0; margin: 0; }
.knob { width: 36px; height: 35px; border-radius: 50%; background: #fff; display: flex; align-items: center; justify-content: center; }
.help { margin-top: 3px; color: #2f708f; }
table { width: 100%; border-collapse: collapse; table-layout: fixed; font-size: 17px; }
.c-title { width: 45%; }
.c-due { width: 25%; }
.c-grade { width: 85px; }
.c-tools { width: 60px; }
th, td { height: 45px; padding: 0 10px; border: 1px solid #dcdcdc; text-align: center; white-space: nowrap; }
th { background: #ededed; color: #777; }
th:first-child, td:first-child { text-align: left; }
th svg { margin: 0 auto; }
td a { color: #9a8f88; }
td input { appearance: none; display: block; width: 15px; height: 14px; margin: 0 auto; border: 2px solid #606060; border-radius: 3px; }
```
